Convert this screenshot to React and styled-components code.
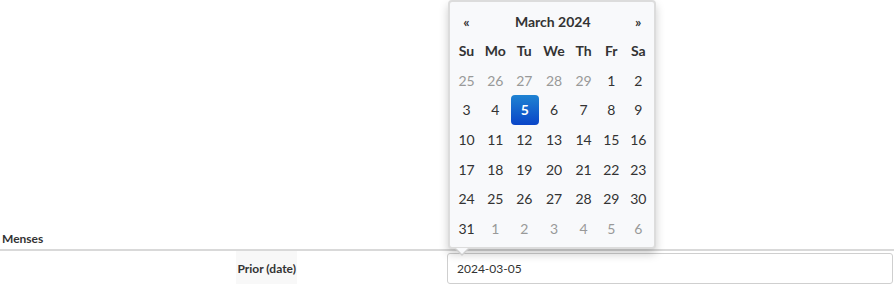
import React from "react"
import styled, { createGlobalStyle } from "styled-components"

const GlobalStyle = createGlobalStyle`
  html, body {
    margin: 0;
    padding: 0;
    background: #fff;
    font-family: Lato, "Liberation Sans", sans-serif;
    color: #333;
  }
`

const Page = styled.div`
  padding-top: 229px;
  width: 894px;
`

const SectionTitle = styled.div`
  font-size: 12px;
  font-weight: bold;
  line-height: 20px;
  padding-left: 2px;
  border-bottom: 2px solid #d9d9d9;
`

const Row = styled.div`
  display: grid;
  grid-template-columns: 297px 1fr;
  height: 34px;
`

const Label = styled.div`
  justify-self: end;
  display: flex;
  align-items: center;
  padding: 0 1px;
  background: #f8f8f8;
  font-size: 12px;
  font-weight: bold;
`

const InputCell = styled.div`
  position: relative;
  padding: 2px 1px 0 150px;
`

const DateInput = styled.div`
  height: 29px;
  border: 1px solid #cfcfcf;
  border-radius: 3px;
  display: flex;
  align-items: center;
  padding-left: 9px;
  font-size: 12px;
  color: #333;
  background: #fff;
`

const Picker = styled.div`
  position: absolute;
  left: 151px;
  bottom: calc(100% + 2px);
  width: 200px;
  padding: 4px 2px;
  border: 2px solid #dcdcdc;
  border-radius: 4px;
  background: #f8f9fb;
  box-shadow: 0 5px 10px rgba(0, 0, 0, 0.2);
  z-index: 10;

  &:before {
    content: "";
    position: absolute;
    left: 5px;
    bottom: -9px;
    border-left: 7px solid transparent;
    border-right: 7px solid transparent;
    border-top: 7px solid #cfcfcf;
  }
  &:after {
    content: "";
    position: absolute;
    left: 6px;
    bottom: -7px;
    border-left: 6px solid transparent;
    border-right: 6px solid transparent;
    border-top: 6px solid #f8f9fb;
  }
`

const Grid = styled.div`
  display: grid;
  grid-template-columns: 29px 28.5px 29.5px 30px 29px 26.5px 27.5px;
  grid-auto-rows: 29.6px;
  font-size: 14px;
`

const Cell = styled.div`
  display: flex;
  align-items: center;
  justify-content: center;
  grid-column: ${p => p.$span ? `span ${p.$span}` : "auto"};
  font-weight: ${p => (p.$bold ? "bold" : "normal")};
  color: ${p => (p.$muted ? "#999" : "#333")};
`

const Active = styled.span`
  display: flex;
  align-items: center;
  justify-content: center;
  width: 28px;
  height: 30px;
  margin-left: 1px;
  border-radius: 4px;
  background: linear-gradient(to bottom, #1f83d2, #0a45c8);
  color: #fff;
  font-weight: bold;
`

const days = ["Su", "Mo", "Tu", "We", "Th", "Fr", "Sa"]

function buildDates() {
  const cells = []
  for (let d = 25; d <= 29; d++) cells.push({ n: d, muted: true })
  for (let d = 1; d <= 31; d++) cells.push({ n: d })
  for (let d = 1; d <= 6; d++) cells.push({ n: d, muted: true })
  return cells
}

export default function App() {
  return (
    <>
      <GlobalStyle />
      <Page>
        <SectionTitle>Menses</SectionTitle>
        <Row>
          <Label>Prior (date)</Label>
          <InputCell>
            <Picker>
              <Grid>
                <Cell $bold>«</Cell>
                <Cell $bold $span={5}>March 2024</Cell>
                <Cell $bold>»</Cell>
                {days.map(d => <Cell key={d} $bold>{d}</Cell>)}
                {buildDates().map((c, i) => (
                  <Cell key={i} $muted={c.muted}>
                    {!c.muted && c.n === 5 ? <Active>5</Active> : c.n}
                  </Cell>
                ))}
              </Grid>
            </Picker>
            <DateInput>2024-03-05</DateInput>
          </InputCell>
        </Row>
      </Page>
    </>
  )
}
